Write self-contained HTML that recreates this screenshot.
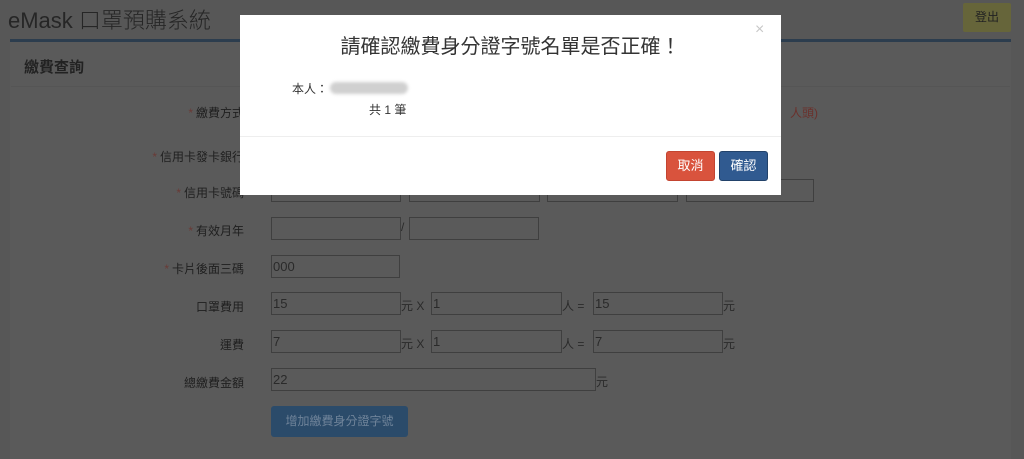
<!DOCTYPE html>
<html><head><meta charset="utf-8"><style>
*{margin:0;padding:0;box-sizing:border-box}
body{width:1024px;height:456px;overflow:hidden;background:#575757;font-family:"Liberation Sans","Noto Sans CJK TC",sans-serif;position:relative;color:#222}
.a{position:absolute}
.lbl{position:absolute;right:780px;font-size:12px;color:#1f1f1f;white-space:nowrap}
.lbl b{color:#6a3a36;font-weight:normal;margin-right:3px}
.in{position:absolute;height:23px;border:1px solid #3f3f3f;background:#5a5a5a;font-size:13px;color:#2a2a2a;padding:2px 1px;line-height:18px}
.u{position:absolute;font-size:12px;color:#2a2a2a}
</style></head><body>
<div class="a" style="left:8px;top:3px;font-size:22px;color:#262626;font-weight:300">eMask 口罩預購系統</div>
<div class="a" style="left:963px;top:3px;width:48px;height:29px;background:#66653a;border-radius:2px;font-size:12px;color:#222;text-align:center;line-height:29px">登出</div>
<div class="a" style="left:10px;top:39px;width:1001px;height:420px;background:#5a5a5a;border-top:3px solid #2c3d4e"></div>
<div class="a" style="left:11px;top:86px;width:999px;height:1px;background:#555"></div>
<div class="a" style="left:24px;top:56px;font-size:15px;font-weight:bold;color:#222">繳費查詢</div>
<div class="lbl" style="top:104px"><b>*</b>繳費方式</div>
<div class="u" style="left:790px;top:104px;color:#6b302b">人頭)</div>
<div class="lbl" style="top:148px"><b>*</b>信用卡發卡銀行</div>
<div class="lbl" style="top:184px"><b>*</b>信用卡號碼</div>
<div class="in" style="left:271px;top:179px;width:130px"></div>
<div class="in" style="left:409px;top:179px;width:131px"></div>
<div class="in" style="left:547px;top:179px;width:131px"></div>
<div class="in" style="left:686px;top:179px;width:128px"></div>
<div class="lbl" style="top:222px"><b>*</b>有效月年</div>
<div class="in" style="left:271px;top:217px;width:130px"></div>
<div class="u" style="left:401px;top:220px">/</div>
<div class="in" style="left:409px;top:217px;width:130px"></div>
<div class="lbl" style="top:260px"><b>*</b>卡片後面三碼</div>
<div class="in" style="left:271px;top:255px;width:129px">000</div>
<div class="lbl" style="top:298px">口罩費用</div>
<div class="in" style="left:271px;top:292px;width:130px">15</div>
<div class="u" style="left:401px;top:297px">元 X</div>
<div class="in" style="left:431px;top:292px;width:131px">1</div>
<div class="u" style="left:562px;top:297px">人 =</div>
<div class="in" style="left:593px;top:292px;width:130px">15</div>
<div class="u" style="left:723px;top:297px">元</div>
<div class="lbl" style="top:336px">運費</div>
<div class="in" style="left:271px;top:330px;width:130px">7</div>
<div class="u" style="left:401px;top:335px">元 X</div>
<div class="in" style="left:431px;top:330px;width:131px">1</div>
<div class="u" style="left:562px;top:335px">人 =</div>
<div class="in" style="left:593px;top:330px;width:130px">7</div>
<div class="u" style="left:723px;top:335px">元</div>
<div class="lbl" style="top:374px">總繳費金額</div>
<div class="in" style="left:271px;top:368px;width:325px">22</div>
<div class="u" style="left:596px;top:373px">元</div>
<div class="a" style="left:271px;top:406px;width:137px;height:31px;background:#2b4b6a;border-radius:3px;color:#6f8399;font-size:12px;text-align:center;line-height:31px">增加繳費身分證字號</div>

<div class="a" style="left:240px;top:15px;width:541px;height:180px;background:#fff">
  <div class="a" style="left:0;top:15px;width:541px;text-align:center;font-size:20px;color:#333">請確認繳費身分證字號名單是否正確！</div>
  <div class="a" style="left:515px;top:6px;font-size:16px;color:#c8c8c8">×</div>
  <div class="a" style="left:52px;top:65px;font-size:12px;color:#333">本人：</div>
  <div class="a" style="left:90px;top:67px;width:78px;height:12px;background:#d0d0d0;border-radius:6px;filter:blur(1.5px)"></div>
  <div class="a" style="left:129px;top:86px;font-size:12px;color:#333">共 1 筆</div>
  <div class="a" style="left:0;top:121px;width:541px;height:1px;background:#eee"></div>
  <div class="a" style="left:426px;top:136px;width:49px;height:30px;background:#d9533d;border:1px solid #c34430;border-radius:3px;color:#fff;font-size:13px;text-align:center;line-height:28px">取消</div>
  <div class="a" style="left:479px;top:136px;width:49px;height:30px;background:#305a90;border:1px solid #22426a;border-radius:3px;color:#fff;font-size:13px;text-align:center;line-height:28px">確認</div>
</div>
</body></html>
